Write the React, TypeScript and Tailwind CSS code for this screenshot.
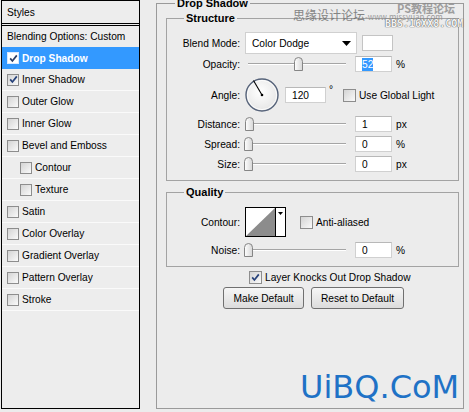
import React from "react";

function Box({ checked, small, dark }: { checked?: boolean; small?: boolean; dark?: boolean }) {
  const cls = small
    ? "flex items-center justify-center w-[12px] h-[12px] border border-[#8d8d8d] bg-gradient-to-br from-[#d4d4d4] to-[#fafafa] shrink-0"
    : "flex items-center justify-center w-[13px] h-[13px] border border-[#8d8d8d] bg-gradient-to-br from-[#d4d4d4] to-[#fafafa] shrink-0";
  const white = dark
    ? "flex items-center justify-center w-[12px] h-[12px] border border-[#d8e8ff] bg-white shrink-0"
    : cls;
  return (
    <span className={white}>
      {checked && (
        <svg width="9" height="9" viewBox="0 0 9 9">
          <path d="M1.2 4.4 L3.4 7 L7.8 1.4" fill="none" stroke={dark ? "#2c3e66" : "#27427a"} strokeWidth="1.7" />
        </svg>
      )}
    </span>
  );
}

function Slider({ pos }: { pos: number }) {
  return (
    <div className="relative w-[104px] h-[16px] shrink-0">
      <div className="absolute left-[3px] right-[3px] top-[7px] h-[1px] bg-[#a5a5a5]" />
      <div className="absolute left-[3px] right-[3px] top-[8px] h-[1px] bg-white" />
      <svg className="absolute top-[1px]" style={{ left: pos - 4 }} width="10" height="14" viewBox="0 0 10 14">
        <defs>
          <linearGradient id="th" x1="0" y1="0" x2="1" y2="0">
            <stop offset="0" stopColor="#ffffff" />
            <stop offset="1" stopColor="#d6d6d6" />
          </linearGradient>
        </defs>
        <path d="M0.5 13.5 V4.5 Q0.5 0.5 4.5 0.5 Q8.5 0.5 8.5 4.5 V13.5 Z" fill="url(#th)" stroke="#858585" />
      </svg>
    </div>
  );
}

function Input({ value, selected, w }: { value: string; selected?: boolean; w: string }) {
  return (
    <div className={`${w} h-[16px] bg-white border border-[#d0d0d0] border-t-[#b8b8b8] flex items-center pl-[6px] shrink-0`}>
      {selected ? <span className="bg-[#3399ff] text-white leading-[13px] px-[0px]">{value}</span> : <span>{value}</span>}
    </div>
  );
}

function Label({ children }: { children: React.ReactNode }) {
  return <div className="w-[73px] text-right shrink-0">{children}</div>;
}

const leftItems: { label: string; checked?: boolean; sub?: boolean }[] = [
  { label: "Inner Shadow", checked: true },
  { label: "Outer Glow" },
  { label: "Inner Glow" },
  { label: "Bevel and Emboss" },
  { label: "Contour", sub: true },
  { label: "Texture", sub: true },
  { label: "Satin" },
  { label: "Color Overlay" },
  { label: "Gradient Overlay" },
  { label: "Pattern Overlay" },
  { label: "Stroke" },
];

export default function App() {
  return (
    <div className="w-[469px] h-[412px] bg-[#ececec] flex relative overflow-hidden font-['Liberation_Sans',Arial,sans-serif] text-[10.2px] text-black leading-[13px]">
      {/* left styles list */}
      <div className="ml-[1px] w-[139px] h-[409px] border border-black bg-[#ededed] flex flex-col shrink-0">
        <div className="h-[22px] flex items-center pl-[5px]">Styles</div>
        <div className="h-[3px] border-y border-black" />
        <div className="h-[21px] flex items-center pl-[5px]">Blending Options: Custom</div>
        <div className="h-[22px] flex items-center pl-[5px] gap-[3px] bg-[#3399ff] text-white font-bold">
          <Box checked small dark />
          <span>Drop Shadow</span>
        </div>
        {leftItems.map((it) => (
          <div
            key={it.label}
            className={
              it.sub
                ? "h-[22px] flex items-center pl-[18px] gap-[3px] border-b border-[#fafafa]"
                : "h-[22px] flex items-center pl-[5px] gap-[3px] border-b border-[#fafafa]"
            }
          >
            <Box checked={it.checked} small />
            <span>{it.label}</span>
          </div>
        ))}
      </div>

      {/* right panel */}
      <div className="ml-[16px] shrink-0">
        <fieldset className="-mt-[4px] w-[308px] h-[413px] border border-[#9a9a9a]">
          <legend className="ml-[18px] px-[2px] font-bold leading-[14px] text-[11px]">Drop Shadow</legend>
          <div className="pl-[9px] flex flex-col">
            <fieldset className="mt-[1px] w-[293px] h-[170px] border border-[#a3a3a3]">
              <legend className="ml-[17px] px-[2px] font-bold leading-[14px] text-[11px]">Structure</legend>
              <div className="flex flex-col">
                <div className="mt-[7px] h-[22px] flex items-center">
                  <Label>Blend Mode:</Label>
                  <div className="ml-[5px] w-[112px] h-[22px] bg-white border border-[#d0d0d0] flex items-center pl-[6px] pr-[4px] justify-between shrink-0">
                    <span>Color Dodge</span>
                    <svg width="9" height="5" viewBox="0 0 9 5" className="mr-[1px]">
                      <path d="M0 0 H9 L4.5 5 Z" fill="#000" />
                    </svg>
                  </div>
                  <div className="ml-[5px] w-[31px] h-[16px] bg-white border border-[#c4c4c4] shrink-0" />
                </div>
                <div className="mt-[2px] h-[16px] flex items-center">
                  <Label>Opacity:</Label>
                  <div className="ml-[5px]"><Slider pos={53} /></div>
                  <div className="ml-[6px]"><Input value="52" selected w="w-[37px]" /></div>
                  <span className="ml-[4px]">%</span>
                </div>
                <div className="mt-[6px] h-[34px] flex items-center">
                  <Label>Angle:</Label>
                  <svg className="ml-[4px] shrink-0" width="36" height="34" viewBox="0 0 36 34">
                    <defs>
                      <radialGradient id="dial" cx="0.45" cy="0.4" r="0.6">
                        <stop offset="0" stopColor="#ffffff" />
                        <stop offset="1" stopColor="#e6e6e6" />
                      </radialGradient>
                    </defs>
                    <circle cx="18" cy="17" r="16" fill="url(#dial)" stroke="#56637a" strokeWidth="1.4" />
                    <circle cx="18" cy="17" r="14.6" fill="none" stroke="#ffffff" strokeWidth="0.8" />
                    <line x1="18" y1="17" x2="9.5" y2="2.5" stroke="#000" strokeWidth="1.1" />
                    <circle cx="18" cy="17" r="1.3" fill="#000" />
                  </svg>
                  <div className="ml-[5px] self-center"><Input value="120" w="w-[41px]" /></div>
                  <span className="ml-[3px] w-[14px] self-start mt-[5px] shrink-0">°</span>
                  <Box />
                  <span className="ml-[3px]">Use Global Light</span>
                </div>
                <div className="mt-[4px] h-[16px] flex items-center">
                  <Label>Distance:</Label>
                  <div className="ml-[5px]"><Slider pos={4} /></div>
                  <div className="ml-[6px]"><Input value="1" w="w-[37px]" /></div>
                  <span className="ml-[4px]">px</span>
                </div>
                <div className="mt-[4px] h-[16px] flex items-center">
                  <Label>Spread:</Label>
                  <div className="ml-[5px]"><Slider pos={3} /></div>
                  <div className="ml-[6px]"><Input value="0" w="w-[37px]" /></div>
                  <span className="ml-[4px]">%</span>
                </div>
                <div className="mt-[4px] h-[16px] flex items-center">
                  <Label>Size:</Label>
                  <div className="ml-[5px]"><Slider pos={3} /></div>
                  <div className="ml-[6px]"><Input value="0" w="w-[37px]" /></div>
                  <span className="ml-[4px]">px</span>
                </div>
              </div>
            </fieldset>

            <fieldset className="mt-[4px] w-[293px] h-[82px] border border-[#a3a3a3]">
              <legend className="ml-[17px] px-[2px] font-bold leading-[14px] text-[11px]">Quality</legend>
              <div className="flex flex-col">
                <div className="mt-[8px] h-[30px] flex items-center">
                  <Label>Contour:</Label>
                  <svg className="ml-[5px] shrink-0" width="41" height="30" viewBox="0 0 41 30">
                    <rect x="0.5" y="0.5" width="40" height="29" fill="#fff" stroke="#000" />
                    <polygon points="1,29 30,1 30,29" fill="#8c8c8c" />
                    <line x1="30.5" y1="0.5" x2="30.5" y2="29.5" stroke="#000" />
                    <path d="M33 5 H38 L35.5 8 Z" fill="#000" />
                  </svg>
                  <span className="ml-[14px]"><Box /></span>
                  <span className="ml-[3px]">Anti-aliased</span>
                </div>
                <div className="mt-[5px] h-[16px] flex items-center">
                  <Label>Noise:</Label>
                  <div className="ml-[5px]"><Slider pos={3} /></div>
                  <div className="ml-[6px]"><Input value="0" w="w-[37px]" /></div>
                  <span className="ml-[4px]">%</span>
                </div>
              </div>
            </fieldset>
          </div>

          <div className="mt-[3px] h-[14px] flex items-center ml-[92px] gap-[3px]">
            <Box checked />
            <span>Layer Knocks Out Drop Shadow</span>
          </div>
          <div className="mt-[3px] flex ml-[66px] gap-[7px]">
            <button className="w-[81px] h-[22px] rounded-[3px] border border-[#707070] bg-gradient-to-b from-[#f6f6f6] to-[#dcdcdc] flex items-center justify-center">
              Make Default
            </button>
            <button className="w-[93px] h-[22px] rounded-[3px] border border-[#707070] bg-gradient-to-b from-[#f6f6f6] to-[#dcdcdc] flex items-center justify-center">
              Reset to Default
            </button>
          </div>
        </fieldset>
      </div>

      {/* watermarks */}
      <div className="absolute left-[293px] top-[9px] text-[12px] leading-[12px] text-[#6a6a6a] font-['Noto_Sans_CJK_SC',sans-serif] whitespace-nowrap opacity-80">
        思缘设计论坛<span className="text-[8px] text-[#8a8a8a]">-www.missyuan.com</span>
      </div>
      <div className="absolute left-[397px] top-[3px] text-[11px] leading-[11px] text-[#8a8a8a] font-bold font-['Noto_Sans_CJK_SC',sans-serif] whitespace-nowrap opacity-80">
        PS教程论坛
      </div>
      <div className="absolute left-[385px] top-[19px] text-[10px] leading-[10px] text-[#f4f4f4] font-bold font-['DejaVu_Sans_Mono',monospace] whitespace-nowrap [text-shadow:0_0_1px_#555,0_0_1px_#555]">
        BBS.16XX8.COM
      </div>
      <div className="absolute left-[300px] top-[371px] text-[32px] leading-[32px] text-[#1f72c6] font-['DejaVu_Sans',sans-serif] whitespace-nowrap">
        UiBQ.CoM
      </div>
    </div>
  );
}
